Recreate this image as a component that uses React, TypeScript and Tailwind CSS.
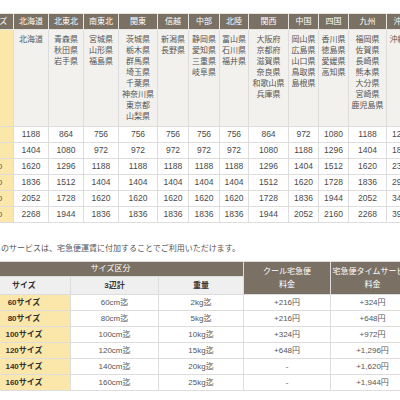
import React from 'react';

// Region columns for the fare table
interface Region {
  name: string;
  w: string;
  prefs: string[];
}

const regions: Region[] = [
  { name: '北海道', w: 'w-[35px]', prefs: ['北海道'] },
  { name: '北東北', w: 'w-[35px]', prefs: ['青森県', '秋田県', '岩手県'] },
  { name: '南東北', w: 'w-[35px]', prefs: ['宮城県', '山形県', '福島県'] },
  { name: '関東', w: 'w-[39px]', prefs: ['茨城県', '栃木県', '群馬県', '埼玉県', '千葉県', '神奈川県', '東京都', '山梨県'] },
  { name: '信越', w: 'w-[31px]', prefs: ['新潟県', '長野県'] },
  { name: '中部', w: 'w-[31px]', prefs: ['静岡県', '愛知県', '三重県', '岐阜県'] },
  { name: '北陸', w: 'w-[29px]', prefs: ['富山県', '石川県', '福井県'] },
  { name: '関西', w: 'w-[40px]', prefs: ['大阪府', '京都府', '滋賀県', '奈良県', '和歌山県', '兵庫県'] },
  { name: '中国', w: 'w-[30px]', prefs: ['岡山県', '広島県', '山口県', '鳥取県', '島根県'] },
  { name: '四国', w: 'w-[30px]', prefs: ['香川県', '徳島県', '愛媛県', '高知県'] },
  { name: '九州', w: 'w-[38px]', prefs: ['福岡県', '佐賀県', '長崎県', '熊本県', '大分県', '宮崎県', '鹿児島県'] },
  { name: '沖縄', w: 'w-[30px]', prefs: ['沖縄県'] },
];

const fares: { size: string; values: number[] }[] = [
  { size: '60', values: [1188, 864, 756, 756, 756, 756, 756, 864, 972, 1080, 1188, 1296] },
  { size: '80', values: [1404, 1080, 972, 972, 972, 972, 972, 1080, 1188, 1296, 1404, 1836] },
  { size: '100', values: [1620, 1296, 1188, 1188, 1188, 1188, 1188, 1296, 1404, 1512, 1620, 2376] },
  { size: '120', values: [1836, 1512, 1404, 1404, 1404, 1404, 1404, 1512, 1620, 1728, 1836, 2916] },
  { size: '140', values: [2052, 1728, 1620, 1620, 1620, 1620, 1620, 1728, 1836, 1944, 2052, 3456] },
  { size: '160', values: [2268, 1944, 1836, 1836, 1836, 1836, 1836, 1944, 2052, 2160, 2268, 3996] },
];

const options = [
  ['60サイズ', '60cm迄', '2kg迄', '+216円', '+324円'],
  ['80サイズ', '80cm迄', '5kg迄', '+216円', '+648円'],
  ['100サイズ', '100cm迄', '10kg迄', '+324円', '+972円'],
  ['120サイズ', '120cm迄', '15kg迄', '+648円', '+1,296円'],
  ['140サイズ', '140cm迄', '20kg迄', '-', '+1,620円'],
  ['160サイズ', '160cm迄', '25kg迄', '-', '+1,944円'],
];

const FareTable = () => (
  <table className="table-fixed border-collapse w-[439px]">
    <colgroup>
      <col className="w-[36px]" />
      {regions.map((r) => (
        <col key={r.name} className={r.w} />
      ))}
    </colgroup>
    <thead>
      <tr>
        <th className="h-[16px] p-0 bg-[#7a7164] text-white font-normal border border-[#e8e6e2] whitespace-nowrap">サイズ</th>
        {regions.map((r) => (
          <th key={r.name} className="h-[16px] p-0 bg-[#7a7164] text-white font-normal border border-[#e8e6e2] whitespace-nowrap">
            {r.name}
          </th>
        ))}
      </tr>
    </thead>
    <tbody>
      <tr>
        <td className="h-[97px] bg-[#fbe7aa] border border-[#dddddd]"></td>
        {regions.map((r) => (
          <td key={r.name} className="h-[97px] align-top pt-[4px] px-0 bg-[#f2f1ed] border border-[#dddddd] text-[#555] leading-[11px] text-center whitespace-nowrap">
            {r.prefs.map((p) => (
              <div key={p}>{p}</div>
            ))}
          </td>
        ))}
      </tr>
      {fares.map((f) => (
        <tr key={f.size}>
          <td className="h-[16px] p-0 text-center bg-[#fbe7aa] border border-[#dddddd] text-[#555]">{f.size}</td>
          {f.values.map((v, i) => (
            <td key={i} className="h-[16px] p-0 text-center bg-white border border-[#dddddd] text-[#4a4a4a] text-[8.5px]">
              {v}
            </td>
          ))}
        </tr>
      ))}
    </tbody>
  </table>
);

const OptionTable = () => (
  <table className="table-fixed border-collapse w-[437px]">
    <colgroup>
      <col className="w-[93px]" />
      <col className="w-[88px]" />
      <col className="w-[85px]" />
      <col className="w-[87px]" />
      <col className="w-[84px]" />
    </colgroup>
    <thead>
      <tr>
        <th colSpan={3} className="h-[15px] p-0 bg-[#7a7164] text-white font-normal border border-[#dddddd]">サイズ区分</th>
        <th rowSpan={2} className="p-0 bg-[#7a7164] text-white font-normal border border-[#dddddd] leading-[13px] whitespace-nowrap overflow-hidden">
          クール宅急便
          <br />
          料金
        </th>
        <th rowSpan={2} className="p-0 bg-[#7a7164] text-white font-normal border border-[#dddddd] leading-[13px] whitespace-nowrap overflow-hidden">
          宅急便タイムサービス
          <br />
          料金
        </th>
      </tr>
      <tr>
        <th className="h-[18px] p-0 bg-[#efefef] text-[#333] font-bold border border-[#dddddd]">サイズ</th>
        <th className="h-[18px] p-0 bg-[#efefef] text-[#333] font-bold border border-[#dddddd]">3辺計</th>
        <th className="h-[18px] p-0 bg-[#efefef] text-[#333] font-bold border border-[#dddddd]">重量</th>
      </tr>
    </thead>
    <tbody>
      {options.map((row) => (
        <tr key={row[0]}>
          <td className="h-[16px] p-0 text-center bg-[#fbe7aa] border border-[#dddddd] text-[#333] font-bold">{row[0]}</td>
          {row.slice(1).map((c, i) => (
            <td key={i} className="h-[16px] p-0 text-center bg-white border border-[#dddddd] text-[#555]">
              {c}
            </td>
          ))}
        </tr>
      ))}
    </tbody>
  </table>
);

export default function App() {
  return (
    <div className="w-[400px] h-[400px] overflow-hidden bg-white font-['Liberation_Sans','Noto_Sans_CJK_JP',sans-serif] text-[8px]">
      <div className="-ml-[23px] pt-[13px]">
        <FareTable />
        <p className="mt-[20px] mb-[6px] leading-[12px] text-[#555] whitespace-nowrap">
          これらのサービスは、宅急便運賃に付加することでご利用いただけます。
        </p>
        <OptionTable />
      </div>
    </div>
  );
}
